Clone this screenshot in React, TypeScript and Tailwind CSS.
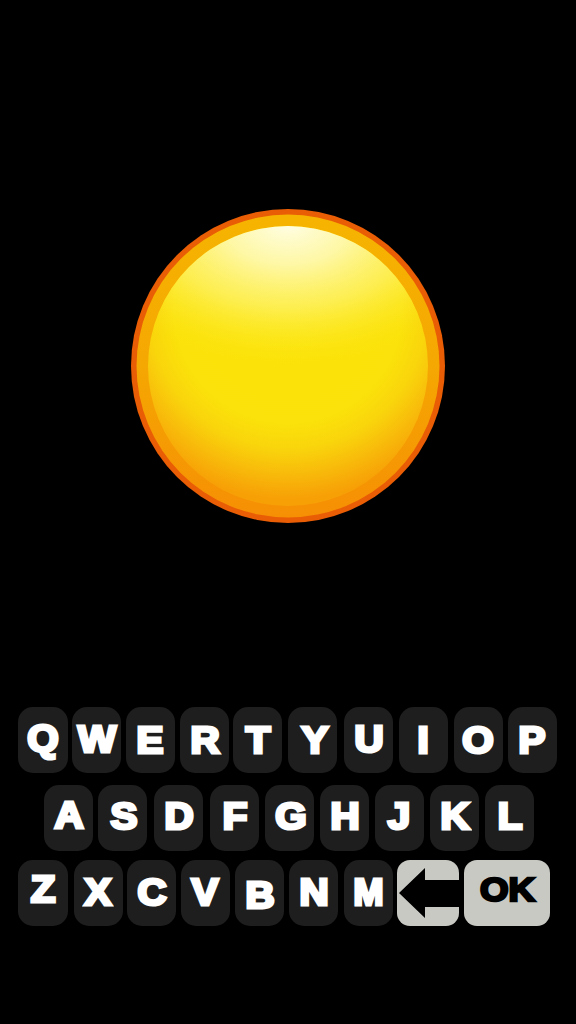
const keyBase = "h-[66px] w-[49px] shrink-0 rounded-[15px] bg-[#1e1e1e] flex items-center justify-center";
const letterBase = "font-['Liberation_Sans',Arial,sans-serif] font-bold text-[36px] leading-none text-white [-webkit-text-stroke:3px_white] scale-x-[1.12] select-none";

type K = { c: string; m: string; t: string };

const row1: K[] = [
  { c: "Q", m: "ml-[18px] w-[50px]", t: "mb-[3px]" },
  { c: "W", m: "ml-[4px]", t: "mb-[0px] scale-x-[0.92]" },
  { c: "E", m: "ml-[5px]", t: "mt-[1px]" },
  { c: "R", m: "ml-[5px]", t: "mt-[1px]" },
  { c: "T", m: "ml-[4px]", t: "mt-[1px]" },
  { c: "Y", m: "ml-[6px]", t: "mt-[2px] ml-[5px]" },
  { c: "U", m: "ml-[7px]", t: "mb-[1px]" },
  { c: "I", m: "ml-[6px]", t: "mt-[2px]" },
  { c: "O", m: "ml-[6px]", t: "mt-[2px]" },
  { c: "P", m: "ml-[5px]", t: "mt-[2px]" },
];
const row2: K[] = [
  { c: "A", m: "ml-[44px]", t: "mb-[4px]" },
  { c: "S", m: "ml-[5px]", t: "mb-[3px] ml-[4px]" },
  { c: "D", m: "ml-[7px]", t: "mb-[3px]" },
  { c: "F", m: "ml-[7px]", t: "mb-[3px]" },
  { c: "G", m: "ml-[6px]", t: "mb-[3px] ml-[4px]" },
  { c: "H", m: "ml-[6px]", t: "mb-[3px]" },
  { c: "J", m: "ml-[6px]", t: "mb-[3px]" },
  { c: "K", m: "ml-[6px]", t: "mb-[3px]" },
  { c: "L", m: "ml-[6px]", t: "mb-[3px]" },
];
const row3: K[] = [
  { c: "Z", m: "ml-[18px] w-[50px]", t: "mb-[6px]" },
  { c: "X", m: "ml-[6px]", t: "mt-[0px]" },
  { c: "C", m: "ml-[4px]", t: "mb-[1px]" },
  { c: "V", m: "ml-[5px]", t: "mb-[1px]" },
  { c: "B", m: "ml-[5px]", t: "mt-[5px]" },
  { c: "N", m: "ml-[5px]", t: "mb-[0px]" },
  { c: "M", m: "ml-[6px]", t: "mb-[0px] scale-x-[1]" },
];

function Row({ keys }: { keys: K[] }) {
  return (
    <>
      {keys.map((k) => (
        <div key={k.c} className={`${keyBase} ${k.m}`}>
          <span className={`${letterBase} ${k.t}`}>{k.c}</span>
        </div>
      ))}
    </>
  );
}

function Ball() {
  return (
    <svg width="316" height="316" viewBox="0 0 316 316" className="block">
      <defs>
        <radialGradient id="base" cx="158" cy="100" r="190" gradientUnits="userSpaceOnUse">
          <stop offset="0" stopColor="#fbe408" />
          <stop offset="0.6" stopColor="#fbe20a" />
          <stop offset="0.74" stopColor="#f9d40c" />
          <stop offset="0.88" stopColor="#f8b80a" />
          <stop offset="1" stopColor="#f7a006" />
        </radialGradient>
        <radialGradient id="hi" cx="0" cy="0" r="1" gradientUnits="userSpaceOnUse" gradientTransform="translate(158 12) scale(215 145)">
          <stop offset="0" stopColor="#fffff0" stopOpacity="0.97" />
          <stop offset="0.3" stopColor="#fffcc8" stopOpacity="0.82" />
          <stop offset="0.6" stopColor="#fff890" stopOpacity="0.52" />
          <stop offset="0.85" stopColor="#fff050" stopOpacity="0.15" />
          <stop offset="1" stopColor="#fde810" stopOpacity="0" />
        </radialGradient>
        <linearGradient id="ring" x1="0" y1="0" x2="0" y2="1">
          <stop offset="0" stopColor="#f6b400" />
          <stop offset="0.5" stopColor="#f5a702" />
          <stop offset="1" stopColor="#f68f04" />
        </linearGradient>
      </defs>
      <circle cx="158" cy="157" r="157" fill="#e95d05" />
      <circle cx="158" cy="157" r="151.5" fill="url(#ring)" />
      <circle cx="158" cy="157" r="140" fill="url(#base)" />
      <circle cx="158" cy="157" r="140" fill="url(#hi)" />
    </svg>
  );
}

export default function App() {
  return (
    <div className="h-[1024px] w-[576px] overflow-hidden bg-black">
      <div className="flex justify-center pt-[209px]">
        <Ball />
      </div>
      <div className="mt-[182px] flex h-[66px]">
        <Row keys={row1} />
      </div>
      <div className="mt-[12px] flex h-[66px]">
        <Row keys={row2} />
      </div>
      <div className="mt-[9px] flex h-[66px]">
        <Row keys={row3} />
        <div className="ml-[4px] flex h-[66px] w-[62px] shrink-0 items-center overflow-hidden rounded-[13px] bg-[#c9c9c4]">
          <svg width="62" height="66" viewBox="0 0 62 66" className="block">
            <path d="M2 33 L28 8 V20 H62 V47 H28 V58 Z" fill="#000" />
          </svg>
        </div>
        <div className="ml-[5px] flex h-[66px] w-[86px] shrink-0 items-center justify-center rounded-[13px] bg-[#c9c9c4]">
          <span className="mb-[8px] scale-x-[1.08] select-none font-['Liberation_Sans',Arial,sans-serif] text-[34px] font-bold leading-none text-black [-webkit-text-stroke:2.6px_black] [text-shadow:0_0_2px_#ffffff]">
            OK
          </span>
        </div>
      </div>
    </div>
  );
}
